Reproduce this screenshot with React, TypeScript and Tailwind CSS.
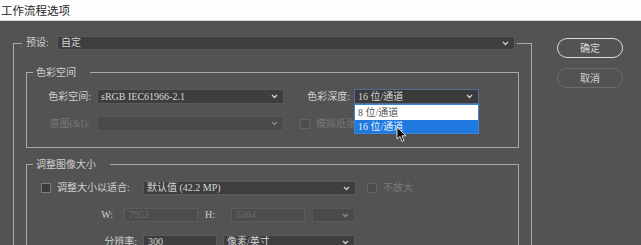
import type { ReactNode } from 'react';

function Chevron({ dim = false }: { dim?: boolean }) {
  return (
    <svg width="7" height="5" viewBox="0 0 7 5" className={dim ? 'text-[#8a8a8a]' : 'text-[#cfcfcf]'}>
      <path d="M1 1 L3.5 3.5 L6 1" fill="none" stroke="currentColor" strokeWidth="1.3" />
    </svg>
  );
}

function Select({
  w,
  text,
  disabled = false,
  focus = false,
  children,
}: {
  w: string;
  text?: string;
  disabled?: boolean;
  focus?: boolean;
  children?: ReactNode;
}) {
  return (
    <div className={`relative ${w} h-full`}>
      <div
        className={`flex h-full items-center justify-between border pl-[3px] pr-[5px] ${
          focus
            ? 'border-[#4d6f96] bg-[#3b3b3b] text-[#d6d6d6]'
            : disabled
              ? 'border-[#575757] bg-[#4a4a4a] text-[#7a7a7a]'
              : 'border-[#5a5a5a] bg-[#3e3e3e] text-[#d6d6d6]'
        }`}
      >
        <span className="whitespace-nowrap">{text}</span>
        <Chevron dim={disabled} />
      </div>
      {children}
    </div>
  );
}

function Input({ w, text, disabled = false }: { w: string; text: string; disabled?: boolean }) {
  return (
    <div
      className={`flex h-full items-center border pl-[4px] ${w} ${
        disabled ? 'border-[#5c5c5c] bg-[#4c4c4c] text-[#6e6e6e]' : 'border-[#5a5a5a] bg-[#3e3e3e] text-[#d6d6d6]'
      }`}
    >
      {text}
    </div>
  );
}

function Check({ disabled = false }: { disabled?: boolean }) {
  return (
    <div
      className={`h-[10px] w-[10px] shrink-0 border ${
        disabled ? 'border-[#626262] bg-[#4d4d4d]' : 'border-[#7a7a7a] bg-[#3c3c3c]'
      }`}
    />
  );
}

export default function App() {
  return (
    <div className="relative h-[245px] w-[641px] overflow-hidden bg-[#535353] font-['Liberation_Serif','Noto_Sans_CJK_SC',serif] text-[10px] leading-[14px] text-[#cfcfcf]">
      {/* title bar */}
      <div className="flex h-[21px] items-center border-b border-[#d6d6d6] bg-[#fdfdfd] pl-[1px] font-['Noto_Sans_CJK_SC',sans-serif] text-[11.5px] text-[#1e1e1e]">
        工作流程选项
      </div>

      <div className="flex">
        {/* main options */}
        <div className="pl-[13px] pt-[15px]">
          <fieldset className="w-[519px] border border-b-0 border-[#a9a9a9]">
            <legend className="ml-[8px] flex h-[14px] items-center px-[2px]">
              <span className="w-[33px] pl-[2px]">预设:</span>
              <Select w="w-[458px]" text="自定" />
            </legend>

            {/* 色彩空间 */}
            <fieldset className="mx-[12px] mt-[15px] border border-[#a9a9a9] pb-[16px] pt-[10px]">
              <legend className="ml-[6px] pl-[3px] pr-[14px] font-['Noto_Sans_CJK_SC',sans-serif]">色彩空间</legend>
              <div className="flex flex-col gap-[12px]">
                <div className="flex h-[15px] items-center">
                  <span className="w-[70px] pr-[6px] text-right">色彩空间:</span>
                  <Select w="w-[187px]" text="sRGB IEC61966-2.1" />
                  <span className="w-[70px] pr-[4px] text-right">色彩深度:</span>
                  <Select w="w-[125px]" text="16 位/通道" focus>
                    <div className="absolute left-0 top-full z-10 w-full border border-[#3d84d6]">
                      <div className="h-[15px] bg-white pl-[3px] leading-[15px] text-[#555]">8 位/通道</div>
                      <div className="h-[13px] bg-[#1f79df] pl-[3px] leading-[13px] text-[#e6f0ff]">16 位/通道</div>
                    </div>
                  </Select>
                </div>
                <div className="flex h-[15px] items-center text-[#777]">
                  <span className="w-[70px] pr-[7px] text-right">意图(&amp;I):</span>
                  <Select w="w-[187px]" disabled />
                  <div className="ml-[16px]">
                    <Check disabled />
                  </div>
                  <span className="ml-[6px]">模拟纸张颜色</span>
                </div>
              </div>
            </fieldset>

            {/* 调整图像大小 */}
            <fieldset className="mx-[12px] mt-[9px] border border-[#a9a9a9] pb-[16px] pt-[10px]">
              <legend className="ml-[6px] pl-[3px] pr-[14px] font-['Noto_Sans_CJK_SC',sans-serif]">调整图像大小</legend>
              <div className="flex flex-col gap-[13px]">
                <div className="flex h-[14px] items-center">
                  <div className="ml-[14px]">
                    <Check />
                  </div>
                  <span className="ml-[6px] w-[86px]">调整大小以适合:</span>
                  <Select w="w-[213px]" text="默认值 (42.2 MP)" />
                  <div className="ml-[11px]">
                    <Check disabled />
                  </div>
                  <span className="ml-[6px] text-[#7a7a7a]">不放大</span>
                </div>
                <div className="flex h-[14px] items-center">
                  <span className="w-[97px] pr-[11px] text-right">W:</span>
                  <Input w="w-[74px]" text="7952" disabled />
                  <span className="w-[33px] pl-[7px]">H:</span>
                  <Input w="w-[74px]" text="5304" disabled />
                  <div className="ml-[7px] h-full">
                    <Select w="w-[43px]" disabled />
                  </div>
                </div>
                <div className="flex h-[14px] items-center">
                  <span className="w-[116px] pr-[6px] text-right">分辨率:</span>
                  <Input w="w-[74px]" text="300" />
                  <div className="ml-[6px] h-full">
                    <Select w="w-[132px]" text="像素/英寸" />
                  </div>
                </div>
              </div>
            </fieldset>
          </fieldset>
        </div>

        {/* buttons */}
        <div className="ml-[25px] flex flex-col gap-[10px] pt-[17px] font-['Noto_Sans_CJK_SC',sans-serif]">
          <button className="flex h-[20px] w-[66px] items-center justify-center rounded-full border-[1.5px] border-[#dcdcdc] text-[10px] text-[#d8d8d8]">
            确定
          </button>
          <button className="flex h-[20px] w-[66px] items-center justify-center rounded-full border border-[#6c6c6c] text-[10px] text-[#cfcfcf]">
            取消
          </button>
        </div>
      </div>

      {/* mouse pointer */}
      <svg className="absolute left-[396px] top-[126px] z-20" width="11" height="17" viewBox="0 0 11 17">
        <path d="M1 1 L1 13 L4 10.5 L6 15.5 L8 14.5 L6 9.8 L10 9.8 Z" fill="#111" stroke="#eee" strokeWidth="0.9" />
      </svg>
    </div>
  );
}
